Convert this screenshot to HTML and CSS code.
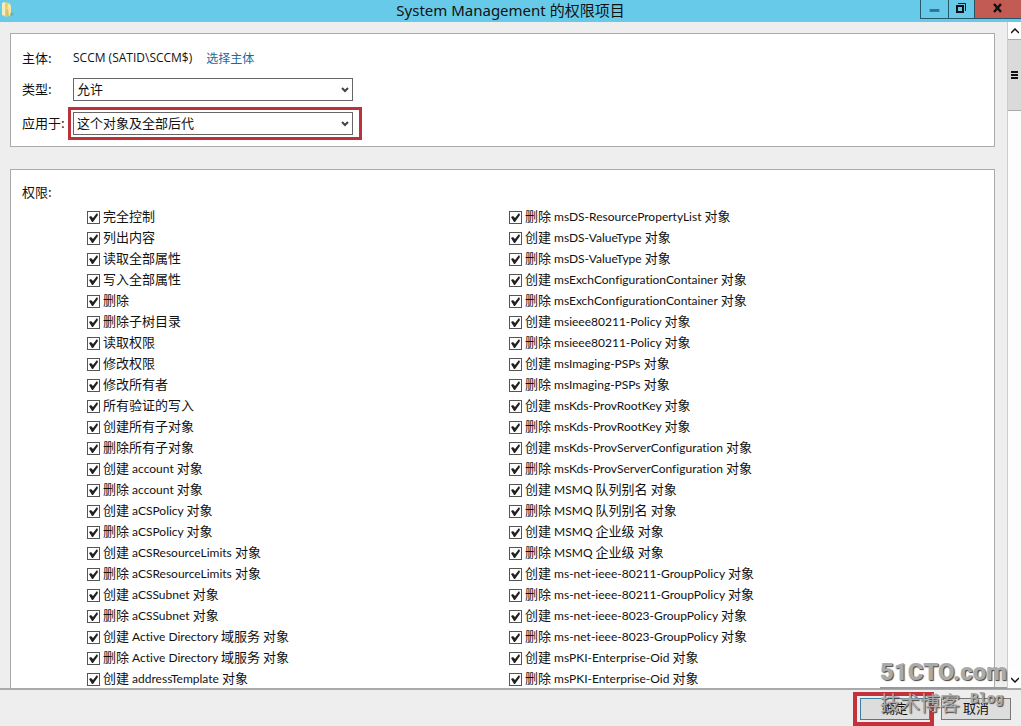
FILE: index.html
```
<!DOCTYPE html>
<html lang="zh-CN">
<head>
<meta charset="utf-8">
<title>System Management 的权限项目</title>
<link rel="stylesheet" href="styles.css">
</head>
<body>
<div class="window">
  <header class="titlebar">
    <svg class="app-icon" viewBox="0 0 16 18" aria-hidden="true">
      <path d="M2 3l3-1v14l-3-1z" fill="#f6edbb"/>
      <path d="M5 2l5 1v13l-5 1z" fill="#e5cf7c"/>
      <path d="M8 4l3 1v9l2 1-2 1H7z" fill="#f3e6a4"/>
      <path d="M6 11l2-2 1 7H6z" fill="#dcbf68"/>
      <path d="M11 12l3 2-2 2h-2z" fill="#6fae9a"/>
    </svg>
    <h1 class="title">System Management <span class="title-cjk">的权限项目</span></h1>
    <div class="controls">
      <button class="control" type="button" aria-label="最小化"><svg viewBox="0 0 28 18"><path d="M9 9h10v3H9z" fill="#2f7390"/></svg></button>
      <button class="control" type="button" aria-label="还原"><svg viewBox="0 0 25 18"><path d="M9 3.500h7.500v7.500" fill="none" stroke="#111"/><path d="M8 6h6v6H8z" fill="none" stroke="#111" stroke-width="2"/></svg></button>
      <button class="control control-close" type="button" aria-label="关闭"><svg viewBox="0 0 46 18"><path d="M19 4l7 8M26 4l-7 8" stroke="#111" stroke-width="2.500"/></svg></button>
    </div>
  </header>
  <div class="viewport">
    <main class="content">
      <section class="panel principal">
        <span class="field-label">主体:</span>
        <div class="field"><span class="latin">SCCM (SATID\SCCM$)</span><a class="pick" href="#">选择主体</a></div>
        <label class="field-label" for="type">类型:</label>
        <div class="field"><div class="picker"><select id="type"><option>允许</option></select><svg class="chevron" viewBox="0 0 8 6"><path d="M1 1l3 3 3-3" fill="none" stroke="#444" stroke-width="2"/></svg></div></div>
        <label class="field-label" for="scope">应用于:</label>
        <div class="field"><div class="picker marked"><select id="scope"><option>这个对象及全部后代</option></select><svg class="chevron" viewBox="0 0 8 6"><path d="M1 1l3 3 3-3" fill="none" stroke="#444" stroke-width="2"/></svg></div></div>
      </section>
      <section class="panel permissions">
        <h2 class="heading">权限:</h2>
        <div class="columns">
          <div class="column">
            <label class="perm"><input type="checkbox" checked>完全控制</label>
            <label class="perm"><input type="checkbox" checked>列出内容</label>
            <label class="perm"><input type="checkbox" checked>读取全部属性</label>
            <label class="perm"><input type="checkbox" checked>写入全部属性</label>
            <label class="perm"><input type="checkbox" checked>删除</label>
            <label class="perm"><input type="checkbox" checked>删除子树目录</label>
            <label class="perm"><input type="checkbox" checked>读取权限</label>
            <label class="perm"><input type="checkbox" checked>修改权限</label>
            <label class="perm"><input type="checkbox" checked>修改所有者</label>
            <label class="perm"><input type="checkbox" checked>所有验证的写入</label>
            <label class="perm"><input type="checkbox" checked>创建所有子对象</label>
            <label class="perm"><input type="checkbox" checked>删除所有子对象</label>
            <label class="perm"><input type="checkbox" checked>创建<span class="latin"> account </span>对象</label>
            <label class="perm"><input type="checkbox" checked>删除<span class="latin"> account </span>对象</label>
            <label class="perm"><input type="checkbox" checked>创建<span class="latin"> aCSPolicy </span>对象</label>
            <label class="perm"><input type="checkbox" checked>删除<span class="latin"> aCSPolicy </span>对象</label>
            <label class="perm"><input type="checkbox" checked>创建<span class="latin"> aCSResourceLimits </span>对象</label>
            <label class="perm"><input type="checkbox" checked>删除<span class="latin"> aCSResourceLimits </span>对象</label>
            <label class="perm"><input type="checkbox" checked>创建<span class="latin"> aCSSubnet </span>对象</label>
            <label class="perm"><input type="checkbox" checked>删除<span class="latin"> aCSSubnet </span>对象</label>
            <label class="perm"><input type="checkbox" checked>创建<span class="latin"> Active Directory </span>域服务<span class="latin"> </span>对象</label>
            <label class="perm"><input type="checkbox" checked>删除<span class="latin"> Active Directory </span>域服务<span class="latin"> </span>对象</label>
            <label class="perm"><input type="checkbox" checked>创建<span class="latin"> addressTemplate </span>对象</label>
          </div>
          <div class="column">
            <label class="perm"><input type="checkbox" checked>删除<span class="latin"> msDS-ResourcePropertyList </span>对象</label>
            <label class="perm"><input type="checkbox" checked>创建<span class="latin"> msDS-ValueType </span>对象</label>
            <label class="perm"><input type="checkbox" checked>删除<span class="latin"> msDS-ValueType </span>对象</label>
            <label class="perm"><input type="checkbox" checked>创建<span class="latin"> msExchConfigurationContainer </span>对象</label>
            <label class="perm"><input type="checkbox" checked>删除<span class="latin"> msExchConfigurationContainer </span>对象</label>
            <label class="perm"><input type="checkbox" checked>创建<span class="latin"> msieee80211-Policy </span>对象</label>
            <label class="perm"><input type="checkbox" checked>删除<span class="latin"> msieee80211-Policy </span>对象</label>
            <label class="perm"><input type="checkbox" checked>创建<span class="latin"> msImaging-PSPs </span>对象</label>
            <label class="perm"><input type="checkbox" checked>删除<span class="latin"> msImaging-PSPs </span>对象</label>
            <label class="perm"><input type="checkbox" checked>创建<span class="latin"> msKds-ProvRootKey </span>对象</label>
            <label class="perm"><input type="checkbox" checked>删除<span class="latin"> msKds-ProvRootKey </span>对象</label>
            <label class="perm"><input type="checkbox" checked>创建<span class="latin"> msKds-ProvServerConfiguration </span>对象</label>
            <label class="perm"><input type="checkbox" checked>删除<span class="latin"> msKds-ProvServerConfiguration </span>对象</label>
            <label class="perm"><input type="checkbox" checked>创建<span class="latin"> MSMQ </span>队列别名<span class="latin"> </span>对象</label>
            <label class="perm"><input type="checkbox" checked>删除<span class="latin"> MSMQ </span>队列别名<span class="latin"> </span>对象</label>
            <label class="perm"><input type="checkbox" checked>创建<span class="latin"> MSMQ </span>企业级<span class="latin"> </span>对象</label>
            <label class="perm"><input type="checkbox" checked>删除<span class="latin"> MSMQ </span>企业级<span class="latin"> </span>对象</label>
            <label class="perm"><input type="checkbox" checked>创建<span class="latin"> ms-net-ieee-80211-GroupPolicy </span>对象</label>
            <label class="perm"><input type="checkbox" checked>删除<span class="latin"> ms-net-ieee-80211-GroupPolicy </span>对象</label>
            <label class="perm"><input type="checkbox" checked>创建<span class="latin"> ms-net-ieee-8023-GroupPolicy </span>对象</label>
            <label class="perm"><input type="checkbox" checked>删除<span class="latin"> ms-net-ieee-8023-GroupPolicy </span>对象</label>
            <label class="perm"><input type="checkbox" checked>创建<span class="latin"> msPKI-Enterprise-Oid </span>对象</label>
            <label class="perm"><input type="checkbox" checked>删除<span class="latin"> msPKI-Enterprise-Oid </span>对象</label>
          </div>
        </div>
      </section>
    </main>
    <div class="scrollbar">
      <button class="arrow" type="button" aria-label="向上滚动"><svg viewBox="0 0 8 6"><path d="M0 5l4-4 4 4" fill="none" stroke="#111" stroke-width="1.500"/></svg></button>
      <div class="thumb"><svg viewBox="0 0 7 8"><path d="M0 0h7v2H0zM0 3h7v2H0zM0 6h7v2H0z" fill="#111"/></svg></div>
      <div class="track"></div>
      <button class="arrow" type="button" aria-label="向下滚动"><svg viewBox="0 0 8 6"><path d="M0 1l4 4 4-4" fill="none" stroke="#111" stroke-width="1.500"/></svg></button>
    </div>
  </div>
  <footer class="footer">
    <div class="ok-mark"><button class="action action-ok" type="button">确定</button></div>
    <button class="action" type="button">取消</button>
  </footer>
  <div class="watermark" aria-hidden="true">
    <div class="mark-top">51CTO.com</div>
    <div class="mark-bottom"><span>技术博客</span><span class="mark-blog">Blog</span></div>
  </div>
</div>
</body>
</html>
```
FILE: styles.css
```
* { box-sizing: border-box; }
body {
  margin: 0;
  font: 13px/20px "Noto Sans CJK SC", "Noto Sans", sans-serif;
  color: #111;
}
button, select { font: inherit; color: inherit; margin: 0; }
.window {
  position: relative;
  display: flex;
  flex-direction: column;
  height: 100vh;
  overflow: hidden;
  background: #eee;
}
.titlebar {
  flex: none;
  display: grid;
  grid-template-columns: 1fr auto 1fr;
  height: 22px;
  background: #67cae9;
}
.app-icon { width: 16px; height: 18px; }
.title {
  margin: 0;
  font: 15px/20px "Noto Sans", "Noto Sans CJK SC", sans-serif;
  white-space: nowrap;
}
.title-cjk { font-family: "Noto Sans CJK SC", sans-serif; }
.controls {
  justify-self: end;
  display: flex;
  height: 19px;
  border: solid #26566b;
  border-width: 0 0 1px 1px;
}
.control {
  width: 28px;
  padding: 0;
  border: 0;
  border-right: 1px solid #26566b;
  background: none;
}
.control + .control { width: 26px; }
.controls .control-close { width: 46px; background: #c25b53; border-right: 0; }
.control svg { display: block; width: 100%; height: 18px; }
.viewport { flex: 1; display: flex; min-height: 0; }
.content {
  flex: 1;
  min-width: 0;
  overflow: hidden;
  padding: 11px 12px 0 10px;
}
.panel { border: 1px solid #aaa; background: #fff; padding-left: 11px; }
.principal {
  display: grid;
  grid-template-columns: 51px 1fr;
  grid-template-rows: 28px 34px 34px;
  align-items: center;
  padding-top: 10px;
  padding-bottom: 6px;
}
.field-label { white-space: nowrap; }
.field { display: flex; align-items: center; }
.latin { font-family: "Open Sans", "Noto Sans", sans-serif; font-size: 12px; white-space: pre; }
.perm .latin { font-family: Lato, "Open Sans", sans-serif; font-variant-ligatures: none; }
.pick {
  margin-left: 14px;
  font-size: 12px;
  color: #1a6a9a;
  text-decoration: none;
}
.picker { position: relative; width: 280px; }
.picker select {
  display: block;
  appearance: none;
  width: 100%;
  height: 23px;
  padding: 0 3px 2px;
  border: 1px solid #666;
  border-radius: 0;
  background: #fff;
}
.marked::after {
  content: "";
  position: absolute;
  inset: -5px -9px -5px -5px;
  border: 3px solid #bb323b;
  pointer-events: none;
}
.chevron {
  position: absolute;
  right: 4px;
  top: 9px;
  width: 8px;
  height: 6px;
  pointer-events: none;
}
.permissions { margin-top: 22px; padding-top: 12px; }
.heading { margin: 0; font: inherit; }
.columns {
  display: grid;
  grid-template-columns: 422px 1fr;
  padding: 4px 0 0 65px;
}
.perm { display: block; height: 21px; white-space: nowrap; }
.perm input {
  appearance: none;
  width: 13px;
  height: 13px;
  margin: 0 3px 0 0;
  border: 1px solid #555;
  background: #fff;
  vertical-align: -3px;
}
.perm input:checked::before {
  content: "";
  display: block;
  height: 11px;
  background: #222;
  clip-path: polygon(1px 5px, 3px 4px, 5px 6px, 9px 1px, 10px 3px, 5px 10px, 4px 10px);
}
.scrollbar {
  flex: none;
  display: flex;
  flex-direction: column;
  width: 14px;
  border-left: 1px solid #ccc;
  background: #fdfdfd;
}
.arrow {
  flex: none;
  display: grid;
  place-items: center;
  height: 17px;
  padding: 0;
  border: 0;
  background: #fff;
}
.arrow svg { width: 8px; height: 6px; }
.thumb {
  display: grid;
  place-items: center;
  height: 72px;
  border: solid #aaa;
  border-width: 1px 0;
  background: #dadada;
}
.thumb svg { width: 7px; height: 8px; }
.track { flex: 1; }
.footer {
  flex: none;
  display: flex;
  justify-content: flex-end;
  align-items: flex-start;
  gap: 7px;
  height: 38px;
  padding: 2px 10px 0 0;
  border-top: 2px solid #aaa;
}
.ok-mark { border: 4px solid #c4313a; padding: 2px 0 2px 3px; }
.action {
  width: 70px;
  height: 22px;
  padding: 0 0 2px;
  border: 1px solid #777;
  background: #ddd;
  line-height: 18px;
}
.footer > .action { margin-top: 6px; }
.action-ok { display: block; border-color: #447ba0; }
.watermark {
  position: absolute;
  right: 14px;
  bottom: 9px;
  color: #aaa;
  text-shadow: 1px 1px 1px #444;
  white-space: nowrap;
  pointer-events: none;
}
.mark-top {
  font: 900 24px/30px Roboto, sans-serif;
  border-bottom: 2px solid #999;
}
.mark-bottom {
  display: flex;
  gap: 10px;
  font-size: 20px;
  line-height: 28px;
}
.mark-blog { font: bold 14px/20px "Liberation Mono", monospace; }
```
